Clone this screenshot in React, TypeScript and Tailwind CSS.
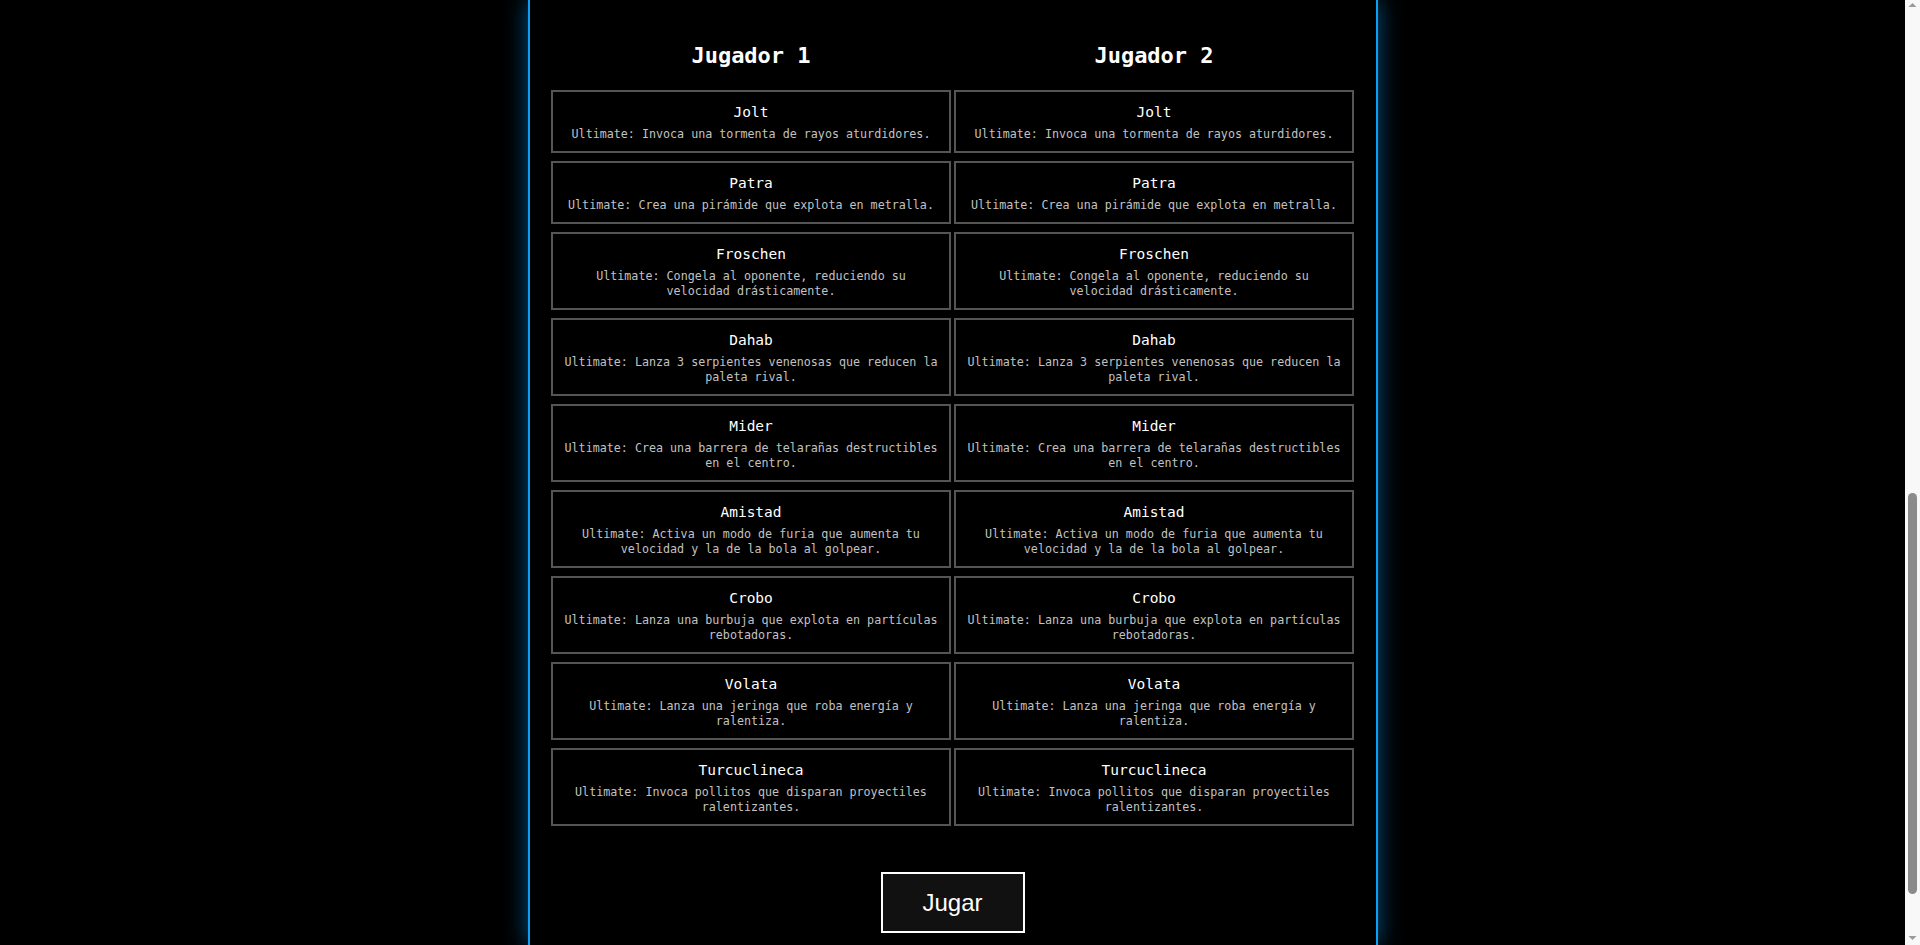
const PERSONAJES = [
  { nombre: "Jolt", ulti: "Ultimate: Invoca una tormenta de rayos aturdidores." },
  { nombre: "Patra", ulti: "Ultimate: Crea una pirámide que explota en metralla." },
  { nombre: "Froschen", ulti: "Ultimate: Congela al oponente, reduciendo su velocidad drásticamente." },
  { nombre: "Dahab", ulti: "Ultimate: Lanza 3 serpientes venenosas que reducen la paleta rival." },
  { nombre: "Mider", ulti: "Ultimate: Crea una barrera de telarañas destructibles en el centro." },
  { nombre: "Amistad", ulti: "Ultimate: Activa un modo de furia que aumenta tu velocidad y la de la bola al golpear." },
  { nombre: "Crobo", ulti: "Ultimate: Lanza una burbuja que explota en partículas rebotadoras." },
  { nombre: "Volata", ulti: "Ultimate: Lanza una jeringa que roba energía y ralentiza." },
  { nombre: "Turcuclineca", ulti: "Ultimate: Invoca pollitos que disparan proyectiles ralentizantes." },
];

function Columna({ titulo }: { titulo: string }) {
  return (
    <div className="flex flex-col">
      <h2 className="text-center text-[22px] leading-[26px] font-bold text-white mb-[21px]">{titulo}</h2>
      <div className="flex flex-col gap-2">
        {PERSONAJES.map((p) => (
          <div key={p.nombre} className="border-2 border-[#555] bg-black px-[10px] pt-3 pb-[9px] text-center">
            <h3 className="text-[14.5px] leading-[17px] text-white">{p.nombre}</h3>
            <p className="mt-[6px] text-[11.7px] leading-[15px] text-[#c2c2c2]">{p.ulti}</p>
          </div>
        ))}
      </div>
    </div>
  );
}

// barra de desplazamiento del navegador (página desplazada hasta el final)
function Scrollbar() {
  return (
    <div className="w-[15px] h-screen bg-[#f8f8f8] flex flex-col items-center">
      <svg width="9" height="17" viewBox="0 0 9 17" className="shrink-0">
        <path d="M0.5 7 L4.5 3 L8.5 7 Z" fill="#9a9a9a" />
      </svg>
      <div className="flex-1 w-full flex flex-col justify-end px-[3px] pb-[17px]">
        <div className="h-[401px] rounded-full bg-[#8b8b8b]" />
      </div>
      <svg width="9" height="34" viewBox="0 0 9 34" className="shrink-0">
        <path d="M0.5 25 L4.5 29 L8.5 25 Z" fill="#9a9a9a" />
      </svg>
    </div>
  );
}

export default function App() {
  return (
    <div className="flex h-screen overflow-hidden bg-black font-['DejaVu_Sans_Mono',monospace]">
      <main className="flex-1 h-screen overflow-hidden">
        <div className="mx-auto w-[850px] h-full border-x-2 border-[#0aa0f5] bg-black shadow-[0_0_22px_rgba(0,150,240,0.55)]">
          <section className="h-full flex flex-col items-center pt-[43px]">
            <div className="grid grid-cols-[400px_400px] gap-x-[3px]">
              <Columna titulo="Jugador 1" />
              <Columna titulo="Jugador 2" />
            </div>

            <button className="mt-[46px] w-[144px] h-[61px] border-2 border-white bg-[#111] text-white text-[24px] font-['Liberation_Sans',Arial,sans-serif]">
              Jugar
            </button>
          </section>
        </div>
      </main>
      <Scrollbar />
    </div>
  );
}
